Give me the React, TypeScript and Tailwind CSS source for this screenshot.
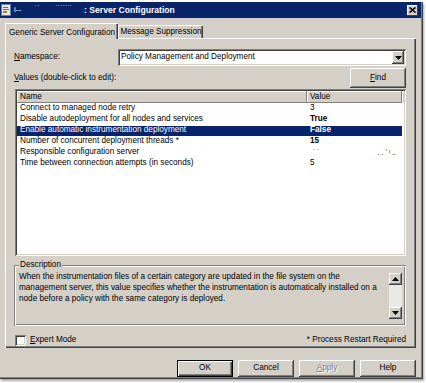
import React from "react";

const raised =
  "bg-[#d4d0c8] shadow-[inset_-1px_-1px_0_#404040,inset_1px_1px_0_#ffffff,inset_-2px_-2px_0_#808080,inset_2px_2px_0_#d4d0c8]";
const sunken =
  "shadow-[inset_1px_1px_0_#808080,inset_-1px_-1px_0_#ffffff,inset_2px_2px_0_#404040,inset_-2px_-2px_0_#d4d0c8]";

const rows: { name: string; value: React.ReactNode; bold?: boolean; selected?: boolean }[] = [
  { name: "Connect to managed node retry", value: "3" },
  { name: "Disable autodeployment for all nodes and services", value: "True", bold: true },
  { name: "Enable automatic instrumentation deployment", value: "False", bold: true, selected: true },
  { name: "Number of concurrent deployment threads *", value: "15", bold: true },
  {
    name: "Responsible configuration server",
    value: (
      <span className="flex w-full items-start leading-[6px] text-[7px]">
        <span className="pl-[3px]">˙ ˙</span>
        <span className="ml-auto pr-[6px]">. . ʼ ˡ ‥</span>
      </span>
    ),
  },
  { name: "Time between connection attempts (in seconds)", value: "5" },
];

function Arrow({ up }: { up?: boolean }) {
  return (
    <svg width="7" height="4" viewBox="0 0 7 4" className={up ? "rotate-180" : ""}>
      <path d="M0 0h7L3.5 4z" fill="#000" />
    </svg>
  );
}

export default function App() {
  return (
    <div className="w-[426px] h-[383px] overflow-hidden bg-white font-['Liberation_Sans',Arial,sans-serif] text-[8.2px] text-black">
      <div className="mt-[2px] flex h-[377px] w-[423px] flex-col bg-[#d4d0c8] shadow-[inset_-1px_-1px_0_#404040,inset_-2px_-2px_0_#808080,1px_2px_2px_rgba(0,0,0,0.35)]">
        {/* title bar */}
        <div className="flex h-[16px] w-[421px] items-center bg-[#0a246a] text-white">
          <svg width="10" height="12" viewBox="0 0 10 12" className="ml-[1px]">
            <rect x="0.5" y="0.5" width="9" height="11" fill="#e8e8e8" stroke="#6b7b9b" />
            <rect x="2" y="3" width="5" height="1" fill="#5a6e96" />
            <rect x="2" y="5" width="6" height="1" fill="#5a6e96" />
            <rect x="2" y="7" width="4" height="2" fill="#a57b3a" />
          </svg>
          <span className="ml-[3px] text-[8px] leading-none">i--</span>
          <span className="ml-[14px] text-[7px] leading-none -translate-y-[2px]">˙˙</span>
          <span className="ml-[16px] text-[7px] leading-none -translate-y-[2px]">˙˙˙˙˙˙˙</span>
          <span className="ml-[12px] text-[8.6px] font-bold">: Server Configuration</span>
          <div className="ml-auto mr-[3px] flex h-[11px] w-[11px] items-center justify-center bg-[#d4d0c8] shadow-[inset_-1px_-1px_0_#404040,inset_1px_1px_0_#ffffff]">
            <svg width="7" height="6" viewBox="0 0 7 6">
              <path d="M0.5 0.5l6 5M6.5 0.5l-6 5" stroke="#000" strokeWidth="1.6" />
            </svg>
          </div>
        </div>

        {/* tabs */}
        <div className="flex h-[20px] items-end pl-[5px]">
          <div className="relative z-10 flex h-[16px] w-[113px] translate-y-[1px] items-start justify-center border-l border-t border-white bg-[#d4d0c8] pt-[3px] shadow-[inset_-1px_0_0_#404040,inset_-2px_0_0_#808080]">
            Generic Server Configuration
          </div>
          <div className="flex h-[13px] w-[85px] items-center justify-center border-l border-t border-white bg-[#d4d0c8] shadow-[inset_-1px_0_0_#404040,inset_-2px_0_0_#808080]">
            Message Suppression
          </div>
        </div>

        {/* panel */}
        <div className="ml-[5px] flex h-[310px] w-[411px] flex-col pl-[9px] pr-[10px] pt-[11px] shadow-[inset_1px_1px_0_#ffffff,inset_-1px_-1px_0_#404040,inset_-2px_-2px_0_#808080]">
          <div className="flex h-[17px] items-center">
            <span className="w-[104px]">
              <span className="underline">N</span>amespace:
            </span>
            <div className={`flex h-[17px] flex-1 items-center bg-white pl-[3px] pr-[2px] ${sunken}`}>
              <span>Policy Management and Deployment</span>
              <div className={`ml-auto flex h-[13px] w-[12px] items-center justify-center ${raised}`}>
                <Arrow />
              </div>
            </div>
          </div>

          <div className="mt-[2px] flex h-[20px] items-center">
            <span>
              <span className="underline">V</span>alues (double-click to edit):
            </span>
            <div className={`ml-auto flex h-[20px] w-[56px] items-center justify-center ${raised}`}>
              <span>
                <span className="underline">F</span>ind
              </span>
            </div>
          </div>

          <div className={`ml-[1px] mt-[1px] flex h-[167px] flex-col bg-white p-[2px] ${sunken}`}>
            <div className="flex h-[12px] bg-[#d4d0c8]">
              <div className="flex w-[290px] items-center pl-[3px] shadow-[inset_-1px_-1px_0_#808080,inset_1px_1px_0_#ffffff]">
                Name
              </div>
              <div className="flex w-[95px] items-center pl-[3px] shadow-[inset_-1px_-1px_0_#808080,inset_1px_1px_0_#ffffff]">
                Value
              </div>
              <div className="flex-1 shadow-[inset_1px_1px_0_#ffffff]" />
            </div>
            {rows.map((r) => (
              <div key={r.name} className="flex h-[11px] items-center">
                <div
                  className={`flex h-[10px] w-[385px] items-center ${
                    r.selected ? "bg-[#0a246a] text-white" : ""
                  }`}
                >
                  <span className="w-[290px] pl-[3px]">{r.name}</span>
                  <span className={`flex w-[95px] pl-[3px] ${r.bold ? "font-bold" : ""}`}>{r.value}</span>
                </div>
              </div>
            ))}
          </div>

          <div className="relative mt-[9px] flex h-[61px] pl-[5px] pr-[4px] pt-[6px] shadow-[inset_1px_1px_0_#808080,inset_-1px_-1px_0_#ffffff,inset_2px_2px_0_#ffffff,inset_-2px_-2px_0_#808080]">
            <span className="absolute -top-[5px] left-[5px] bg-[#d4d0c8] px-[1px] leading-[10px]">Description</span>
            <p className="w-[370px] leading-[11px]">
              When the instrumentation files of a certain category are updated in the file system on the
              management server, this value specifies whether the instrumentation is automatically installed on a
              node before a policy with the same category is deployed.
            </p>
            <div className="ml-auto mt-[2px] flex h-[46px] w-[13px] flex-col bg-[#ebe9e4]">
              <div className={`flex h-[12px] items-center justify-center ${raised}`}>
                <Arrow up />
              </div>
              <div className="flex-1" />
              <div className={`flex h-[12px] items-center justify-center ${raised}`}>
                <Arrow />
              </div>
            </div>
          </div>

          <div className="mt-[8px] flex h-[12px] items-center">
            <div className={`ml-[1px] h-[11px] w-[11px] bg-white ${sunken}`} />
            <span className="ml-[4px]">
              <span className="underline">E</span>xpert Mode
            </span>
            <span className="ml-auto">* Process Restart Required</span>
          </div>
        </div>

        {/* buttons */}
        <div className="mt-[12px] flex h-[17px] justify-end gap-[5px] pr-[7px]">
          <div className="flex w-[56px] items-center justify-center bg-[#d4d0c8] shadow-[inset_0_0_0_1px_#000000,inset_2px_2px_0_#ffffff,inset_-2px_-2px_0_#404040,inset_-3px_-3px_0_#808080]">
            OK
          </div>
          <div className={`flex w-[56px] items-center justify-center ${raised}`}>Cancel</div>
          <div className={`flex w-[56px] items-center justify-center text-[#808080] ${raised}`}>
            <span className="[text-shadow:1px_1px_0_#ffffff]">
              <span className="underline">A</span>pply
            </span>
          </div>
          <div className={`flex w-[56px] items-center justify-center ${raised}`}>Help</div>
        </div>
      </div>
    </div>
  );
}
